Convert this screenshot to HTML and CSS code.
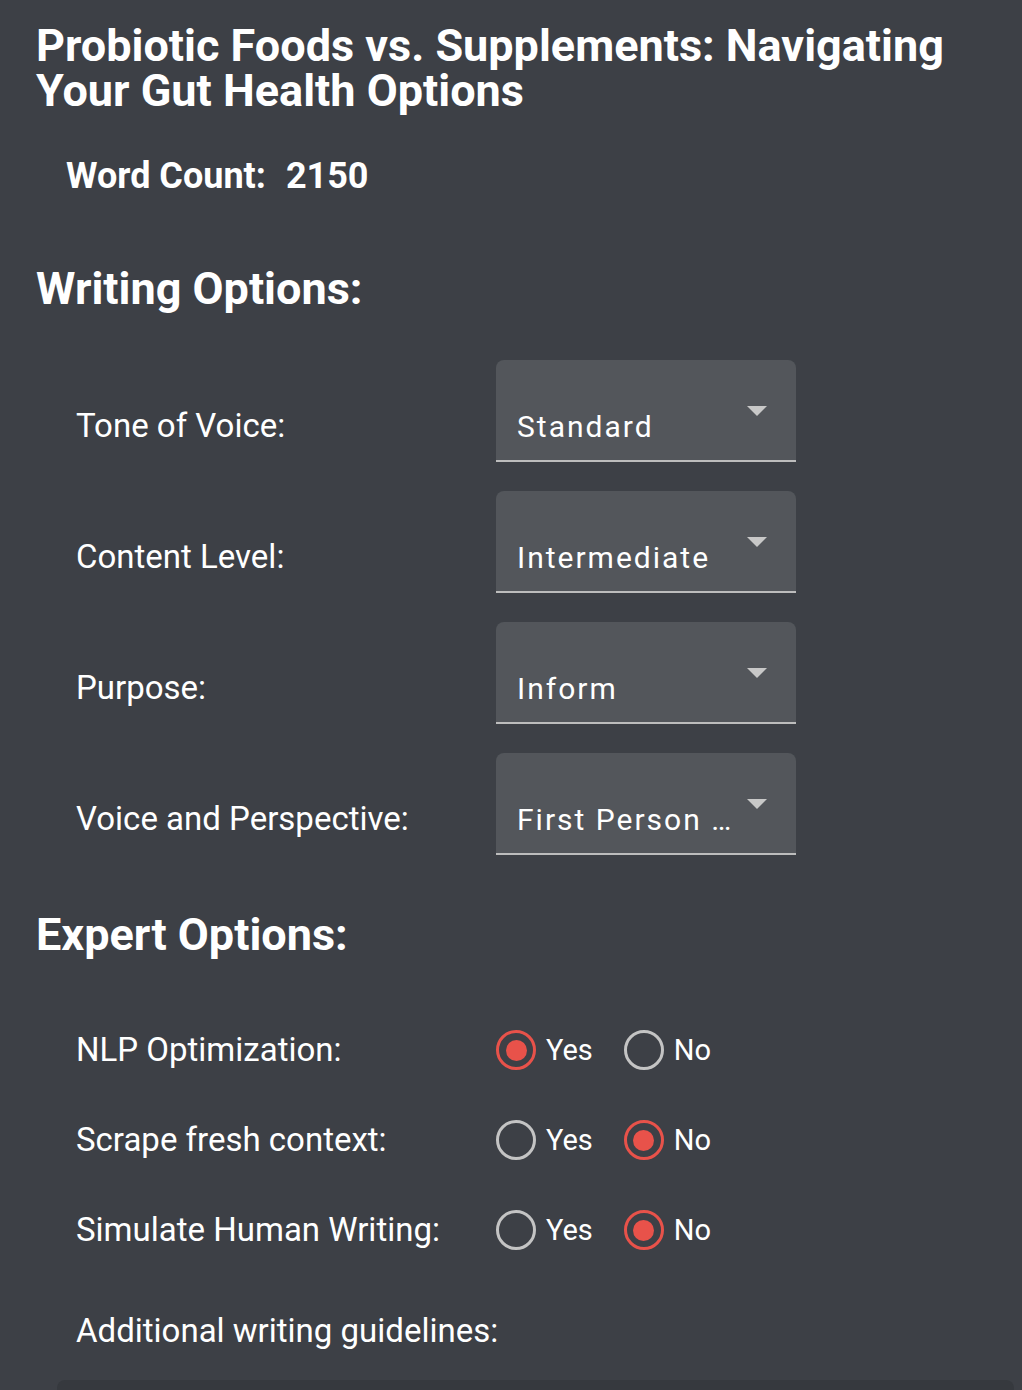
FILE: index.html
```html
<!DOCTYPE html>
<html lang="en">
<head>
<meta charset="utf-8">
<title>Writing Options</title>
<link rel="stylesheet" href="styles.css">
</head>
<body>
<main class="page">
  <h1 class="title">Probiotic Foods vs. Supplements: Navigating Your Gut Health Options</h1>
  <div class="word-count"><span>Word Count:</span><span class="wc-num">2150</span></div>

  <h2 class="section-title">Writing Options:</h2>
  <div class="fields">
    <div class="field-row">
      <div class="field-label">Tone of Voice:</div>
      <div class="select"><span class="select-value">Standard</span></div>
    </div>
    <div class="field-row">
      <div class="field-label">Content Level:</div>
      <div class="select"><span class="select-value">Intermediate</span></div>
    </div>
    <div class="field-row">
      <div class="field-label">Purpose:</div>
      <div class="select"><span class="select-value">Inform</span></div>
    </div>
    <div class="field-row">
      <div class="field-label">Voice and Perspective:</div>
      <div class="select"><span class="select-value">First Person …</span></div>
    </div>
  </div>

  <h2 class="section-title expert">Expert Options:</h2>
  <div class="radios">
    <div class="radio-row">
      <div class="field-label">NLP Optimization:</div>
      <div class="radio-group">
        <label class="radio"><span class="circle checked"></span><span class="radio-text">Yes</span></label>
        <label class="radio"><span class="circle"></span><span class="radio-text">No</span></label>
      </div>
    </div>
    <div class="radio-row">
      <div class="field-label">Scrape fresh context:</div>
      <div class="radio-group">
        <label class="radio"><span class="circle"></span><span class="radio-text">Yes</span></label>
        <label class="radio"><span class="circle checked"></span><span class="radio-text">No</span></label>
      </div>
    </div>
    <div class="radio-row">
      <div class="field-label">Simulate Human Writing:</div>
      <div class="radio-group">
        <label class="radio"><span class="circle"></span><span class="radio-text">Yes</span></label>
        <label class="radio"><span class="circle checked"></span><span class="radio-text">No</span></label>
      </div>
    </div>
  </div>

  <div class="guidelines-label">Additional writing guidelines:</div>
  <div class="guidelines-box"></div>
</main>
</body>
</html>
```

FILE: styles.css
```css
html, body {
  margin: 0;
  padding: 0;
  background: #3d4046;
}

body {
  font-family: Roboto, "Liberation Sans", sans-serif;
  color: #ffffff;
  overflow: hidden;
  height: 1390px;
}

.page {
  padding: 23px 8px 0 36px;
}

.title {
  margin: 0;
  font-size: 45px;
  line-height: 45px;
  font-weight: 700;
  max-width: 960px;
}

.word-count {
  margin: 43px 0 0 30px;
  font-size: 36px;
  line-height: 40px;
  font-weight: 700;
  display: flex;
  gap: 20px;
}

.section-title {
  margin: 68px 0 0 0;
  font-size: 45px;
  line-height: 50px;
  font-weight: 700;
}

.section-title.expert {
  margin-top: 55px;
}

.fields {
  margin-top: 46px;
  display: flex;
  flex-direction: column;
  gap: 29px;
}

.field-row {
  display: flex;
  align-items: baseline;
}

.field-label {
  width: 460px;
  padding-left: 40px;
  box-sizing: border-box;
  font-size: 33px;
  line-height: 40px;
  font-weight: 400;
  flex-shrink: 0;
}

.select {
  position: relative;
  width: 300px;
  box-sizing: border-box;
  padding: 52px 50px 18px 21px;
  background: #53565b;
  border-radius: 8px 8px 0 0;
  border-bottom: 2px solid #bdbdbd;
  font-size: 30px;
  line-height: 30px;
  letter-spacing: 2px;
  white-space: nowrap;
}

.select::after {
  content: "";
  position: absolute;
  right: 29px;
  top: 46px;
  width: 0;
  height: 0;
  border-left: 10px solid transparent;
  border-right: 10px solid transparent;
  border-top: 10px solid #c8c8c8;
}

.radios {
  margin-top: 70px;
  display: flex;
  flex-direction: column;
  gap: 50px;
}

.radio-row {
  display: flex;
  align-items: center;
  height: 40px;
}

.radio-group {
  display: flex;
  gap: 31px;
}

.radio {
  display: flex;
  align-items: center;
  gap: 10px;
}

.circle {
  width: 40px;
  height: 40px;
  box-sizing: border-box;
  border-radius: 50%;
  border: 3.5px solid #c4c4c4;
  display: flex;
  align-items: center;
  justify-content: center;
}

.circle.checked {
  border-color: #e8524a;
}

.circle.checked::before {
  content: "";
  width: 21px;
  height: 21px;
  border-radius: 50%;
  background: #e8524a;
}

.radio-text {
  font-size: 29px;
  line-height: 40px;
}

.guidelines-label {
  margin-top: 61px;
  padding-left: 40px;
  font-size: 33px;
  line-height: 40px;
}

.guidelines-box {
  margin: 29px 0 0 21px;
  width: 957px;
  height: 10px;
  background: #36393e;
  border-radius: 8px 8px 0 0;
}
```
